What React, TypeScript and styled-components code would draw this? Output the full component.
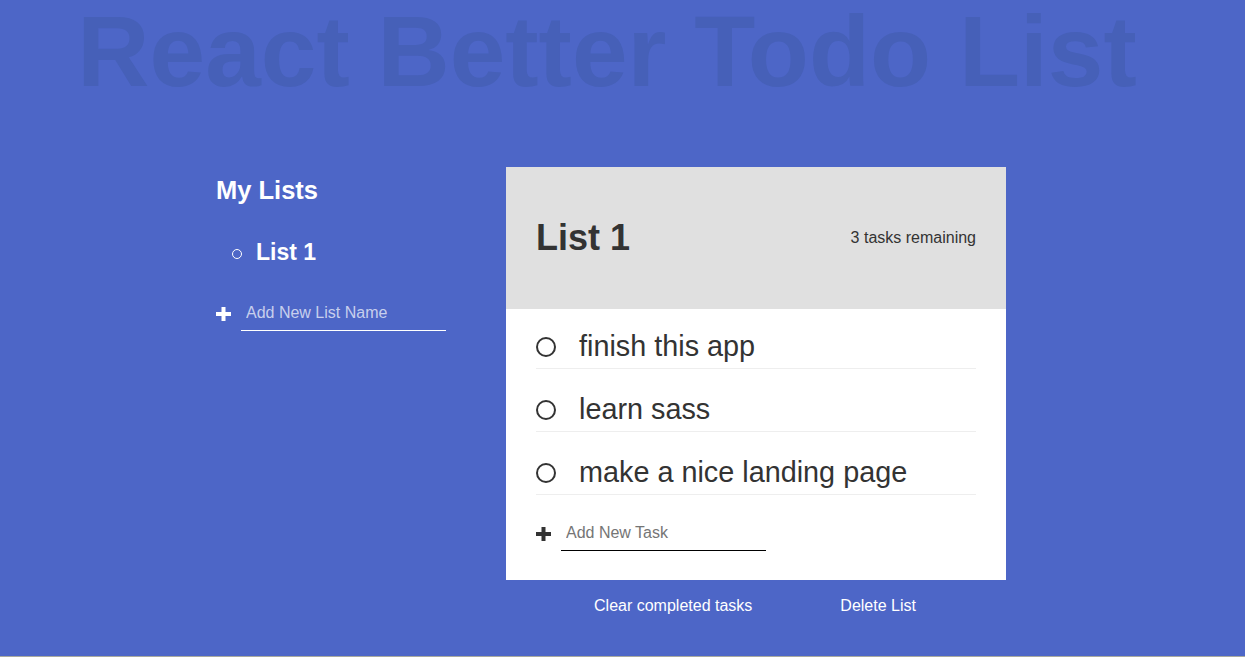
import React from "react";
import styled, { createGlobalStyle } from "styled-components";

const tasks = ["finish this app", "learn sass", "make a nice landing page"];

const GlobalStyle = createGlobalStyle`
  * { box-sizing: border-box; }
  body {
    margin: 0;
    background: #4d66c7;
    font-family: "Liberation Sans", Arial, Helvetica, sans-serif;
  }
`;

const PlusIcon = ({ color }: { color: string }) => (
  <Plus width="15" height="14" viewBox="0 0 15 14">
    <rect x="5.5" y="0" width="4" height="14" fill={color} />
    <rect x="0" y="5" width="15" height="4" fill={color} />
  </Plus>
);

export default function App() {
  return (
    <Page>
      <GlobalStyle />
      <Title>React Better Todo List</Title>
      <Layout>
        <Sidebar>
          <SideHeading>My Lists</SideHeading>
          <ListNames>
            <ListName>List 1</ListName>
          </ListNames>
          <NewForm>
            <PlusIcon color="#ffffff" />
            <NewInput $light placeholder="Add New List Name" />
          </NewForm>
        </Sidebar>
        <Main>
          <Card>
            <CardHeader>
              <ListTitle>List 1</ListTitle>
              <Remaining>3 tasks remaining</Remaining>
            </CardHeader>
            <CardBody>
              {tasks.map((t) => (
                <Task key={t}>
                  <Check />
                  <TaskLabel>{t}</TaskLabel>
                </Task>
              ))}
              <NewForm $inCard>
                <PlusIcon color="#333333" />
                <NewInput placeholder="Add New Task" />
              </NewForm>
            </CardBody>
          </Card>
          <Actions>
            <ActionButton>Clear completed tasks</ActionButton>
            <ActionButton>Delete List</ActionButton>
          </Actions>
        </Main>
      </Layout>
    </Page>
  );
}

const Page = styled.div`
  min-height: 657px;
  border-bottom: 1px solid #a9aaa0;
`;

const Title = styled.h1`
  margin: 0;
  padding: 2px 31px 0 0;
  text-align: center;
  font-size: 100px;
  line-height: 0.98;
  font-weight: 700;
  color: #4660b8;
`;

const Layout = styled.div`
  display: grid;
  grid-template-columns: 290px 500px;
  justify-content: center;
  padding-right: 23px;
  margin-top: 67px;
`;

const Sidebar = styled.aside`
  color: #ffffff;
`;

const SideHeading = styled.h2`
  margin: 9px 0 0;
  font-size: 25.5px;
  font-weight: 700;
`;

const ListNames = styled.ul`
  list-style: none;
  margin: 34px 0 0;
  padding: 0 0 0 16px;
`;

const ListName = styled.li`
  display: flex;
  align-items: center;
  gap: 14px;
  font-size: 23px;
  font-weight: 700;

  &::before {
    content: "";
    width: 8px;
    height: 8px;
    margin-top: 3px;
    border: 1px solid #ffffff;
    border-radius: 50%;
  }
`;

const NewForm = styled.form<{ $inCard?: boolean }>`
  display: flex;
  align-items: center;
  gap: 10px;
  margin-top: ${(p) => (p.$inCard ? "21px" : "30px")};
`;

const Plus = styled.svg`
  flex-shrink: 0;
  display: block;
`;

const NewInput = styled.input<{ $light?: boolean }>`
  width: 205px;
  padding: 8px 5px;
  border: none;
  border-bottom: 1px solid ${(p) => (p.$light ? "#ffffff" : "#000000")};
  background: transparent;
  outline: none;
  font-family: inherit;
  font-size: 16px;
  color: ${(p) => (p.$light ? "#ffffff" : "#333333")};

  &::placeholder {
    color: ${(p) => (p.$light ? "rgba(255, 255, 255, 0.7)" : "#757575")};
  }
`;

const Main = styled.main``;

const Card = styled.section`
  background: #ffffff;
`;

const CardHeader = styled.header`
  display: flex;
  align-items: center;
  justify-content: space-between;
  height: 142px;
  padding: 0 30px;
  background: #e0e0e0;
  color: #333333;
`;

const ListTitle = styled.h2`
  margin: 0;
  font-size: 36px;
  font-weight: 700;
`;

const Remaining = styled.p`
  margin: 0;
  font-size: 16px;
`;

const CardBody = styled.div`
  padding: 0 30px 29px;
`;

const Task = styled.div`
  display: flex;
  align-items: center;
  padding: 24px 0 5px;
  border-bottom: 1px solid #eeeeee;

  &:first-child {
    padding-top: 21px;
  }
`;

const Check = styled.span`
  flex-shrink: 0;
  width: 20px;
  height: 20px;
  margin-right: 23px;
  border: 2px solid #333333;
  border-radius: 50%;
`;

const TaskLabel = styled.span`
  font-size: 1.8rem;
  color: #333333;
`;

const Actions = styled.div`
  display: flex;
  justify-content: space-evenly;
  margin-top: 9px;
  padding-right: 2px;
`;

const ActionButton = styled.button`
  padding: 8px 0;
  border: none;
  background: none;
  font-family: inherit;
  font-size: 16px;
  color: #ffffff;
  cursor: pointer;
`;
